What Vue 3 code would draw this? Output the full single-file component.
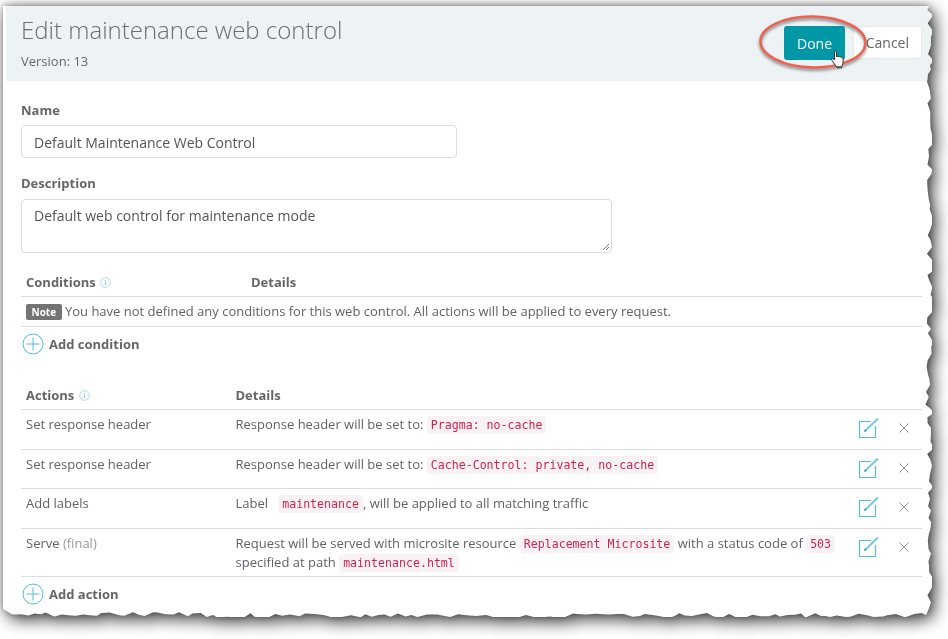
<script setup>
import { computed } from 'vue'

const rows = [
  { name: 'Set response header', parts: [['t', 'Response header will be set to: '], ['c', 'Pragma: no-cache']] },
  { name: 'Set response header', parts: [['t', 'Response header will be set to: '], ['c', 'Cache-Control: private, no-cache']] },
  { name: 'Add labels', parts: [['t', 'Label \u00a0 '], ['c', 'maintenance'], ['t', ', will be applied to all matching traffic']] },
  {
    name: 'Serve', final: true,
    parts: [['t', 'Request will be served with microsite resource '], ['c', 'Replacement Microsite'], ['t', ' with a status code of '], ['c', '503'], ['t', ' specified at path '], ['c', 'maintenance.html']]
  }
]

// torn paper outline for the right and bottom edges of the sheet
const torn = computed(() => {
  let seed = 17
  const rnd = () => {
    seed = (seed * 16807) % 2147483647
    return seed / 2147483647
  }
  const W = 929, H = 611
  const pts = ['0px 0px', `${W - 3}px 0px`]
  for (let y = 4; y < H - 4; y += 4 + rnd() * 5) {
    pts.push(`${(W - 5 + rnd() * 7 - (y > 360 && y < 400 ? 2 : 0)).toFixed(1)}px ${y.toFixed(1)}px`)
  }
  pts.push(`${W - 6}px ${H - 2}px`)
  for (let x = W - 10; x > 4; x -= 4 + rnd() * 6) {
    pts.push(`${x.toFixed(1)}px ${(H - 4 + rnd() * 5 - (x < 200 ? 1.5 : 0)).toFixed(1)}px`)
  }
  pts.push(`0px ${H - 8}px`)
  return `polygon(${pts.join(', ')})`
})
</script>

<template>
  <div class="page">
    <div class="shadow">
      <div class="sheet" :style="{ clipPath: torn }">
        <header class="head">
          <div>
            <h1>Edit maintenance web control</h1>
            <div class="version">Version: 13</div>
          </div>
          <div class="buttons">
            <button class="done">Done</button>
            <button class="cancel">Cancel</button>
          </div>
        </header>

        <div class="body">
          <label class="lbl">Name</label>
          <div class="input">Default Maintenance Web Control</div>
          <label class="lbl lbl2">Description</label>
          <div class="textarea">
            Default web control for maintenance mode
            <svg class="grip" width="8" height="8" viewBox="0 0 8 8"><path d="M1 7 7 1M4 7 7 4" stroke="#777" fill="none" stroke-width="1" /></svg>
          </div>

          <div class="thead cond-grid">
            <div class="th">Conditions
              <svg class="info" width="11" height="11" viewBox="0 0 11 11"><circle cx="5.5" cy="5.5" r="4.8" fill="none" stroke="#a5dbed" /><path d="M5.5 3v.8M5.5 4.8v3.2" stroke="#7fcbe4" /></svg>
            </div>
            <div class="th">Details</div>
          </div>
          <div class="note-row"><span class="note">Note</span> You have not defined any conditions for this web control. All actions will be applied to every request.</div>
          <div class="add">
            <svg width="22" height="22" viewBox="0 0 22 22"><circle cx="11" cy="11" r="10" fill="none" stroke="#55bcdb" stroke-width="1" /><path d="M11 4.5v13M4.5 11h13" stroke="#55bcdb" stroke-width="1" /></svg>
            Add condition
          </div>

          <div class="thead act-grid actions-head">
            <div class="th">Actions
              <svg class="info" width="11" height="11" viewBox="0 0 11 11"><circle cx="5.5" cy="5.5" r="4.8" fill="none" stroke="#a5dbed" /><path d="M5.5 3v.8M5.5 4.8v3.2" stroke="#7fcbe4" /></svg>
            </div>
            <div class="th">Details</div>
          </div>
          <div v-for="(r, i) in rows" :key="i" class="row act-grid" :class="{ tall: r.final }">
            <div>{{ r.name }} <span v-if="r.final" class="final">(final)</span></div>
            <div class="detail">
              <template v-for="(p, j) in r.parts" :key="j">
                <code v-if="p[0] === 'c'">{{ p[1] }}</code>
                <template v-else>{{ p[1] }}</template>
              </template>
            </div>
            <div class="tools">
              <svg width="24" height="22" viewBox="0 0 24 22">
                <path d="M18.500 9V20.500H2.500V4.500H14" fill="none" stroke="#55bcdb" stroke-width="1.200" />
                <path d="M8.500 13.500 21 1.500" fill="none" stroke="#7ccbe4" stroke-width="2.200" />
                <path d="M7.500 14.500 9 13" stroke="#3f9fc0" stroke-width="2" />
              </svg>
              <svg width="12" height="12" viewBox="0 0 12 12"><path d="M1.500 1.500l9 9M10.500 1.500l-9 9" stroke="#8f8f8f" stroke-width="1" fill="none" /></svg>
            </div>
          </div>
          <div class="add add2">
            <svg width="22" height="22" viewBox="0 0 22 22"><circle cx="11" cy="11" r="10" fill="none" stroke="#55bcdb" stroke-width="1" /><path d="M11 4.500v13M4.500 11h13" stroke="#55bcdb" stroke-width="1" /></svg>
            Add action
          </div>
        </div>
      </div>
    </div>

    <svg class="ring" width="116" height="62" viewBox="0 0 116 62">
      <ellipse cx="58" cy="30" rx="52.500" ry="25.500" transform="rotate(1 58 30)" fill="none" stroke="#f1604d" stroke-width="2.400" />
    </svg>
    <svg class="hand" width="16" height="20" viewBox="0 0 16 20">
      <path d="M4.500 2c0-1.500 2-1.500 2 0v5c.5-1 2-1 2.300 0 .5-.8 2-.7 2.200.4.500-.6 2-.4 2 .8v4.300c0 2-1 3-2 4.500H6.500L2 10.500c-1-1.200.5-2.500 1.500-1.500l1 1z" fill="#fff" stroke="#333" stroke-width="1" />
      <path d="M7 16v2h5v-2" fill="#666" stroke="#444" stroke-width=".8" />
    </svg>
  </div>
</template>

<style scoped>
.page {
  position: relative;
  width: 948px;
  height: 639px;
  overflow: hidden;
  background: #fff;
  font-family: "Open Sans", sans-serif;
  color: #5f6366;
}
.shadow {
  padding: 6px 0 0 3px;
  filter: drop-shadow(0 -1px 3px rgba(0, 0, 0, 0.3)) drop-shadow(4px 5px 8px rgba(0, 0, 0, 0.75));
}
.sheet {
  width: 929px;
  height: 611px;
  background: #fff;
  box-sizing: border-box;
  padding-left: 3px;
}
.head {
  height: 75px;
  box-sizing: border-box;
  background: #edf2f5;
  display: flex;
  justify-content: space-between;
  padding: 9px 0 0 15px;
}
h1 {
  margin: 0;
  font-size: 24px;
  font-weight: 300;
  line-height: 30px;
  color: #6a6e71;
}
.version {
  margin-top: 7px;
  font-size: 13px;
  line-height: 18px;
  color: #666;
}
.buttons {
  display: flex;
  align-items: flex-start;
  gap: 8px;
  padding: 11px 10px 0 0;
}
button {
  font-family: inherit;
  font-size: 14px;
  border-radius: 3px;
  box-sizing: border-box;
}
.done {
  width: 61px;
  height: 34px;
  background: #0097a7;
  color: #fff;
  border: 0;
}
.cancel {
  width: 69px;
  height: 33px;
  background: #fff;
  color: #666;
  border: 1px solid #e8e8e8;
  text-align: right;
  padding: 0 12px 0 0;
}
.body {
  padding: 0 10px 0 15px;
  font-size: 13px;
}
.lbl {
  display: block;
  padding-top: 20px;
  font-weight: 700;
  line-height: 18px;
  color: #666;
}
.lbl2 { padding-top: 16px; }
.input, .textarea {
  position: relative;
  box-sizing: border-box;
  border: 1px solid #dcdcdc;
  border-radius: 4px;
  font-size: 14px;
  color: #555;
  padding: 0 12px;
  margin-top: 6px;
}
.input {
  width: 436px;
  height: 33px;
  line-height: 34px;
}
.textarea {
  width: 591px;
  height: 54px;
  line-height: 20px;
  padding-top: 6px;
  margin-top: 7px;
}
.grip { position: absolute; right: 1px; bottom: 1px; }
.thead {
  border-bottom: 1px solid #ddd;
  display: grid;
  padding: 0 5px;
  height: 30px;
  box-sizing: border-box;
  align-items: center;
  font-weight: 700;
}
.cond-grid { grid-template-columns: 225px 1fr; margin-top: 14px; }
.act-grid { grid-template-columns: 209.500px 1fr 74.500px; }
.actions-head { margin-top: 19px; }
.th { color: #666; }
.info { vertical-align: -1px; margin-left: 1px; }
.note-row {
  border-bottom: 1px solid #ddd;
  height: 30px;
  line-height: 29px;
  padding: 0 5px;
  box-sizing: border-box;
  font-size: 13px;
}
.note {
  display: inline-block;
  background: #737373;
  color: #fff;
  font-size: 10px;
  font-weight: 700;
  line-height: 16px;
  padding: 0 5.500px;
  border-radius: 2px;
  vertical-align: 0;
}
.add {
  display: flex;
  align-items: center;
  gap: 5px;
  height: 34px;
  padding-left: 1px;
  font-weight: 700;
  color: #666;
}
.row {
  display: grid;
  border-bottom: 1px solid #ddd;
  padding: 5px 5px 0;
  box-sizing: border-box;
  height: 39.700px;
  font-size: 13px;
  line-height: 18px;
}
.row.tall { height: 48px; }
.final { color: #999; }
.detail { padding-right: 6px; }
code {
  font-family: "DejaVu Sans Mono", monospace;
  font-size: 11.600px;
  color: #d1234f;
  background: #f9f2f4;
  padding: 2px 4px;
  border-radius: 4px;
}
.tools {
  display: flex;
  align-items: center;
  gap: 17px;
  height: 24px;
  padding: 1px 0 0 14.500px;
}
.ring {
  position: absolute;
  left: 755px;
  top: 12px;
  filter: drop-shadow(0 2px 1.500px rgba(0, 0, 0, 0.5));
}
.hand { position: absolute; left: 830px; top: 50px; }
</style>
